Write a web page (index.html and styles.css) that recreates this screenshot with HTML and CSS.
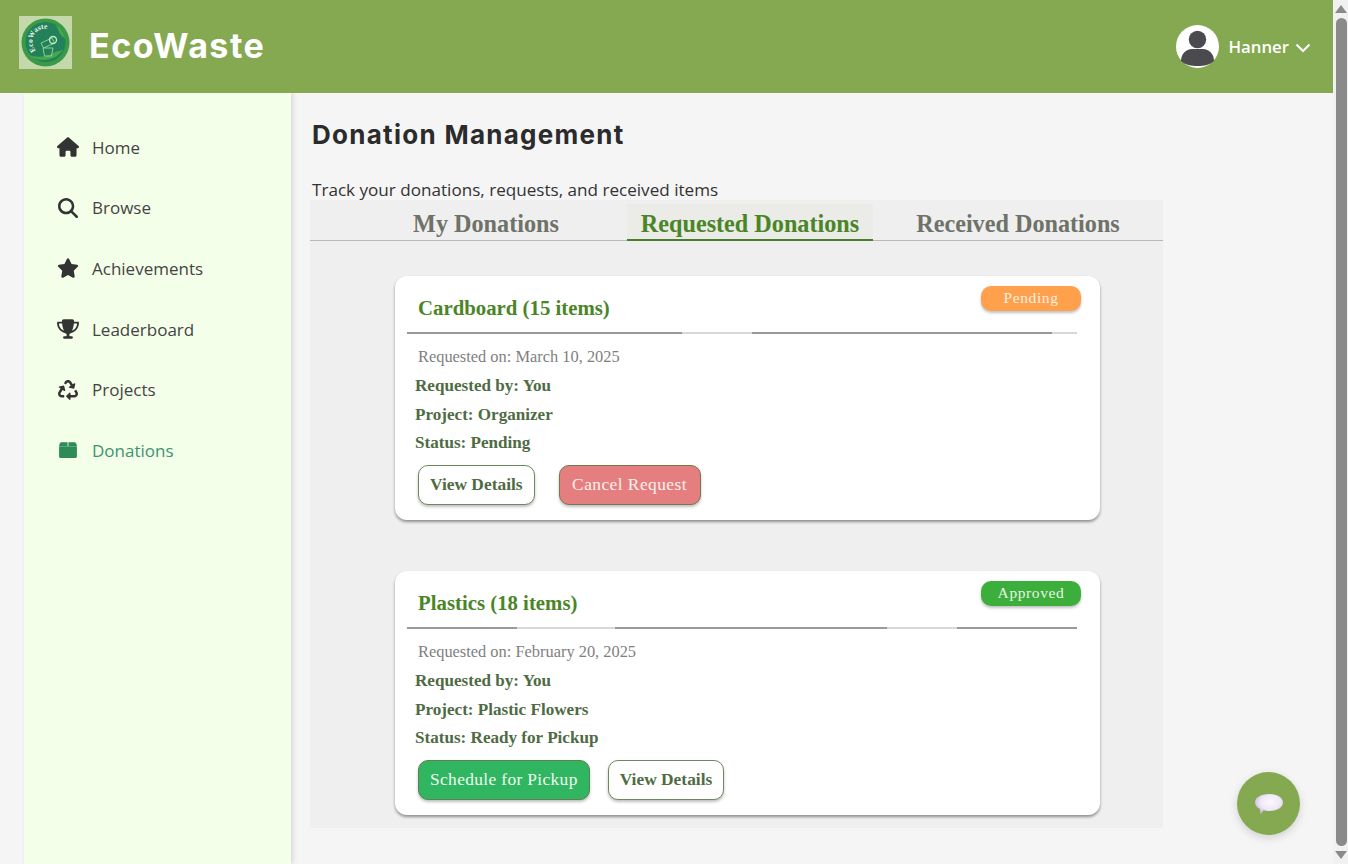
FILE: index.html
```html
<!DOCTYPE html>
<html lang="en">
<head>
<meta charset="utf-8">
<title>EcoWaste - Donation Management</title>
<link rel="stylesheet" href="styles.css">
</head>
<body>
<div class="window">
  <div class="page">
    <header class="topbar">
      <div class="brand">
        <svg class="logo" viewBox="0 0 53 53" aria-hidden="true">
          <rect width="53" height="53" fill="#c3d8ab"/>
          <circle cx="26.500" cy="26.500" r="24" fill="#3b9a45"/>
          <circle cx="26.500" cy="26" r="20" fill="#22805a"/>
          <path d="M9 39c8 6 20 7 29 1l6-6-4 1c-6 1-8 4-13 5-6 1-12 1-18-1z" fill="#45a84e"/>
          <path d="M37 9c5 3 8 8 9 14l-5-5z" fill="#45a84e"/>
          <path id="logoArc" d="M17 34.500A13 13 0 0 1 29.500 13" fill="none"/>
          <text class="logo-text"><textPath href="#logoArc">EcoWaste</textPath></text>
          <g fill="none" stroke="#8fd08f" stroke-width="1">
            <path d="M22 27l11-5 2.500 5-11 5z"/>
            <path d="M24 32h10l-1.500 8h-7z"/>
            <circle cx="34" cy="24" r="3.500" stroke="#c8ecc4" stroke-width="1.300"/>
          </g>
        </svg>
        <span class="brand-name">EcoWaste</span>
      </div>
      <div class="user">
        <svg class="avatar" viewBox="0 0 43 43" aria-hidden="true">
          <circle cx="21.500" cy="21.500" r="21.500" fill="#fff"/>
          <circle cx="21.500" cy="14.500" r="8.700" fill="#4b4b4f"/>
          <path d="M5 36c0-8 6-12 11-12h11c5 0 11 4 11 12-4 4-10 5-16.500 5S9 40 5 36z" fill="#4b4b4f"/>
        </svg>
        <span class="user-name">Hanner</span>
        <svg class="chevron" viewBox="0 0 16 10" aria-hidden="true"><path d="M1.500 1.500L8 8l6.500-6.500" fill="none" stroke="#fff" stroke-width="2"/></svg>
      </div>
    </header>
    <div class="body-row">
      <nav class="sidebar">
        <a class="nav-item"><svg class="nav-icon" viewBox="0 0 576 512"><path d="M575.800 255.500c0 18-15 32.100-32 32.100h-32l.7 160.200c0 2.700-.2 5.400-.5 8.100V472c0 22.100-17.900 40-40 40H456c-1.100 0-2.200 0-3.300-.1c-1.400 .1-2.800 .1-4.200 .1H416 392c-22.100 0-40-17.900-40-40V448 384c0-17.700-14.300-32-32-32H256c-17.700 0-32 14.300-32 32v64 24c0 22.100-17.900 40-40 40H160 128.100c-1.500 0-3-.1-4.500-.2c-1.200 .1-2.400 .2-3.600 .2H104c-22.100 0-40-17.900-40-40V360c0-.9 0-1.900 .1-2.800V287.600H32c-18 0-32-14-32-32.100c0-9 3-17 10-24L266.400 8c7-7 15-8 22-8s15 2 21 7L564.800 231.500c8 7 12 15 11 24z"/></svg>Home</a>
        <a class="nav-item"><svg class="nav-icon" viewBox="0 0 512 512"><path d="M416 208c0 45.900-14.900 88.300-40 122.700L502.600 457.400c12.500 12.500 12.500 32.800 0 45.300s-32.800 12.500-45.300 0L330.700 376c-34.400 25.200-76.800 40-122.700 40C93.100 416 0 322.900 0 208S93.100 0 208 0S416 93.100 416 208zM208 352a144 144 0 1 0 0-288 144 144 0 1 0 0 288z"/></svg>Browse</a>
        <a class="nav-item"><svg class="nav-icon" viewBox="0 0 576 512"><path d="M316.900 18C311.600 7 300.400 0 288.100 0s-23.400 7-28.800 18L195 150.300 51.400 171.500c-12 1.800-22 10.200-25.700 21.700s-.7 24.200 7.900 32.700L137.800 329 113.200 474.700c-2 12 3 24.200 12.900 31.300s23 8 33.800 2.300l128.300-68.500 128.300 68.500c10.800 5.700 23.900 4.900 33.800-2.300s14.900-19.300 12.900-31.300L438.500 329 542.700 225.900c8.600-8.500 11.700-21.200 7.900-32.700s-13.700-19.900-25.700-21.700L381.200 150.300 316.900 18z"/></svg>Achievements</a>
        <a class="nav-item"><svg class="nav-icon" viewBox="0 0 576 512"><path d="M400 0H176c-26.500 0-48.100 21.800-47.100 48.200c.2 5.300 .4 10.600 .7 15.800H24C10.700 64 0 74.700 0 88c0 92.600 33.500 157 78.500 200.700c44.300 43.100 98.300 64.800 138.100 75.800c23.400 6.500 39.400 26 39.400 45.600c0 20.900-17 37.900-37.900 37.900H192c-17.700 0-32 14.300-32 32s14.300 32 32 32H384c17.700 0 32-14.300 32-32s-14.300-32-32-32H357.900C337 448 320 431 320 410.100c0-19.600 15.900-39.200 39.400-45.600c39.900-11 93.900-32.700 138.200-75.800C542.500 245 576 180.600 576 88c0-13.300-10.700-24-24-24H446.400c.3-5.200 .5-10.400 .7-15.800C448.100 21.800 426.500 0 400 0zM48.900 112h84.400c9.100 90.100 29.200 150.300 51.900 190.600c-24.900-11-50.800-26.500-73.200-48.300c-32-31.100-58-76-63-142.300zM464.100 254.300c-22.400 21.800-48.300 37.300-73.200 48.300c22.700-40.300 42.800-100.500 51.900-190.600h84.400c-5.100 66.300-31.100 111.200-63 142.300z"/></svg>Leaderboard</a>
        <a class="nav-item"><svg class="nav-icon" viewBox="0 0 512 512"><path d="M184.561 261.903c3.232 13.997-12.123 24.635-24.068 17.168l-40.736-25.455-50.867 81.402C55.606 356.273 70.96 384 96.012 384H148c6.627 0 12 5.373 12 12v40c0 6.627-5.373 12-12 12H96.115c-75.334 0-121.302-83.048-81.408-146.880l50.822-81.388-40.725-25.448c-12.081-7.547-8.966-25.961 4.879-29.158l110.237-25.450c8.611-1.988 17.201 3.381 19.189 11.990l25.452 110.237zm98.561-182.915l41.289 66.076-40.740 25.457c-12.051 7.528-9 25.953 4.879 29.158l110.237 25.450c8.672 1.999 17.215-3.438 19.189-11.990l25.450-110.237c3.197-13.844-11.990-24.719-24.068-17.168l-40.687 25.424-41.263-66.082c-37.521-60.033-125.209-60.171-162.816 0l-17.963 28.766c-3.510 5.620-1.800 13.021 3.820 16.533l33.919 21.195c5.620 3.512 13.024 1.803 16.536-3.817l17.961-28.743c12.712-20.341 41.973-19.676 54.257-.022zM497.288 301.120l-27.515-44.065c-3.511-5.623-10.916-7.334-16.538-3.821l-33.861 21.159c-5.620 3.512-7.330 10.915-3.818 16.536l27.564 44.112c13.257 21.211-2.057 48.960-27.136 48.960H320V336.020c0-14.213-17.242-21.383-27.313-11.313l-80 79.981c-6.249 6.248-6.249 16.379 0 22.627l80 79.989C302.689 517.308 320 510.300 320 495.989V448h95.880c75.274 0 121.335-82.997 81.408-146.880z"/></svg>Projects</a>
        <a class="nav-item nav-active"><svg class="nav-icon" viewBox="-60 -10 632 532"><path d="M70 32C44 32 24 50 14 82L0 140h244V32zM268 32v108h244l-14-58C488 50 468 32 442 32zM0 150v290c0 26 18 44 44 44h424c26 0 44-18 44-44V150z"/></svg>Donations</a>
      </nav>
      <main class="content">
        <h1 class="page-title">Donation Management</h1>
        <p class="page-sub">Track your donations, requests, and received items</p>
        <section class="panel">
          <div class="tabs">
            <div class="tab tab-my">My Donations</div>
            <div class="tab tab-req">Requested Donations</div>
            <div class="tab tab-rec">Received Donations</div>
          </div>
          <article class="card card-first">
            <span class="badge badge-pending">Pending</span>
            <h2 class="card-title">Cardboard (15 items)</h2>
            <div class="rule rule-a"></div>
            <p class="date">Requested on: March 10, 2025</p>
            <p class="info">Requested by: You</p>
            <p class="info">Project: Organizer</p>
            <p class="info">Status: Pending</p>
            <div class="actions actions-wide">
              <button class="btn btn-outline">View Details</button>
              <button class="btn btn-danger">Cancel Request</button>
            </div>
          </article>
          <article class="card">
            <span class="badge badge-approved">Approved</span>
            <h2 class="card-title">Plastics (18 items)</h2>
            <div class="rule rule-b"></div>
            <p class="date">Requested on: February 20, 2025</p>
            <p class="info">Requested by: You</p>
            <p class="info">Project: Plastic Flowers</p>
            <p class="info">Status: Ready for Pickup</p>
            <div class="actions">
              <button class="btn btn-success">Schedule for Pickup</button>
              <button class="btn btn-outline">View Details</button>
            </div>
          </article>
        </section>
      </main>
    </div>
    <button class="chat" aria-label="Chat">
      <svg viewBox="0 0 30 24" width="30" height="24" aria-hidden="true">
        <defs><radialGradient id="bubble" cx="55%" cy="40%" r="65%"><stop offset="0" stop-color="#fbf8fd"/><stop offset=".55" stop-color="#efe8f6"/><stop offset="1" stop-color="#c3aede"/></radialGradient></defs>
        <path d="M15 2c8 0 14 3.500 14 8.500S23 19 15 19c-2 0-4-.2-5.500-.7L6.500 22.500 6 17C3 15.500 1 13.200 1 10.500 1 5.500 7 2 15 2z" fill="url(#bubble)"/>
      </svg>
    </button>
  </div>
  <div class="scrollbar">
    <span class="arrow-up"></span>
    <span class="thumb"></span>
    <span class="arrow-down"></span>
  </div>
</div>
</body>
</html>
```

FILE: styles.css
```css
* { box-sizing: border-box; }
html, body { margin: 0; height: 100%; overflow: hidden; }
body { font-family: "Open Sans", sans-serif; background: #f5f5f5; color: #333; }

.window { display: flex; height: 864px; width: 1348px; }
.page { position: relative; flex: 1; min-width: 0; display: flex; flex-direction: column; background: #f5f5f5; }

.scrollbar { width: 15px; background: #f1f1f1; display: flex; flex-direction: column; align-items: center; }
.thumb { width: 11px; flex: 1; margin: 2px 0 3px 1px; background: #8a8a8a; border-radius: 6px; }
.arrow-up, .arrow-down { width: 0; height: 0; border-left: 6px solid transparent; border-right: 6px solid transparent; }
.arrow-up { border-bottom: 8px solid #8a8a8a; margin: 5px 0 3px; }
.arrow-down { border-top: 8px solid #8a8a8a; margin: 2px 0 5px; }

.topbar { height: 93px; flex: none; background: #85a951; display: flex; align-items: center; justify-content: space-between; padding: 0 22px 0 19px; position: relative; z-index: 2; }
.brand { display: flex; align-items: center; gap: 17px; }
.logo { width: 53px; height: 53px; display: block; margin-bottom: 8px; }
.logo-text { font-family: "Liberation Serif", serif; font-weight: 700; font-size: 7.500px; fill: #eef7ea; }
.brand-name { font-family: "Inter", sans-serif; font-weight: 700; font-size: 34px; color: #fff; letter-spacing: 1.500px; margin-bottom: 2px; }
.user { display: flex; align-items: center; margin-top: -1px; }
.avatar { width: 43px; height: 43px; display: block; margin-right: 9px; }
.user-name { font-weight: 600; font-size: 16.800px; color: #fff; margin-right: 6px; }
.chevron { width: 16px; height: 10px; display: block; margin-top: 3px; }

.body-row { flex: 1; min-height: 0; display: flex; }

.sidebar { width: 267px; margin-left: 24px; flex: none; background: #f4ffe9; box-shadow: 2px 0 5px rgba(0,0,0,.12); padding-top: 24px; display: flex; flex-direction: column; }
.nav-item { height: 60.600px; display: flex; align-items: center; padding-left: 33px; font-size: 17px; color: #444; }
.nav-icon { width: 22px; height: 20px; margin-right: 13px; fill: #333; flex: none; }
.nav-active { color: #3d9470; }
.nav-active .nav-icon { fill: #2e8b57; }

.content { flex: 1; min-width: 0; padding: 0 170px 0 19px; }
.page-title { margin: 23px 0 0 2px; font-family: "Inter", sans-serif; font-weight: 700; font-size: 26px; line-height: 38px; color: #2b2b2b; letter-spacing: 1.280px; }
.page-sub { margin: 25px 0 0 2px; font-size: 17.100px; line-height: 22px; color: #333; }

.panel { margin-top: -1px; background: #efefef; height: 628px; padding-bottom: 13px; }

.tabs { height: 41px; display: flex; padding-left: 35px; border-bottom: 1px solid #b8b8b8; margin-bottom: 35px; }
.tab { font-family: "Liberation Serif", serif; font-weight: 700; font-size: 24.200px; line-height: 47px; height: 41px; text-align: center; color: #6e7268; white-space: nowrap; }
.tab-my { width: 282px; }
.tab-req { width: 246px; color: #4a8526; background: #ebebe8; border-bottom: 2px solid #4a7d2c; margin-top: 4px; height: 37px; line-height: 39px; }
.tab-rec { width: 290px; }

.card { position: relative; width: 705px; height: 244px; margin-left: 85px; background: #fff; border-radius: 12px; box-shadow: 0 2px 3px rgba(0,0,0,.4); padding: 0 23px; }
.card-first { margin-bottom: 51px; }
.badge { position: absolute; top: 10px; right: 19px; width: 100px; height: 25px; border-radius: 10px; color: #fff0e0; font-family: "Liberation Serif", serif; font-size: 15.500px; letter-spacing: .6px; line-height: 24px; text-align: center; box-shadow: 0 2px 3px rgba(0,0,0,.25); }
.badge-pending { background: #ffa04d; }
.badge-approved { background: #3cae3c; color: #e6f6e6; }
.card-title { margin: 0; padding-top: 19px; font-family: "Liberation Serif", serif; font-weight: 700; font-size: 20.800px; line-height: 26px; color: #4a8526; }
.rule { height: 2px; margin: 11px -1px 0 -11px; width: 670px; }
.rule-a { background: linear-gradient(90deg, #999 0 275px, #d8d8d8 275px 345px, #999 345px 645px, #d8d8d8 645px); }
.rule-b { background: linear-gradient(90deg, #999 0 110px, #d8d8d8 110px 208px, #999 208px 480px, #d8d8d8 480px 550px, #999 550px); }
.date { margin: 13px 0 0; font-family: "Liberation Serif", serif; font-size: 16.400px; line-height: 20px; color: #7f7f7f; }
.info { margin: 0 0 0 -3px; font-family: "Liberation Serif", serif; font-weight: 700; font-size: 17.100px; line-height: 28.500px; color: #4f6b44; }
.date + .info { margin-top: 5px; }
.actions { display: flex; gap: 18px; margin-top: 7px; }
.actions-wide { gap: 24px; }
.btn { height: 40px; border-radius: 10px; font-family: "Liberation Serif", serif; font-weight: 700; font-size: 17.400px; padding: 0 11px; border: 1.500px solid #6b8a5c; box-shadow: 0 2px 3px rgba(0,0,0,.25); }
.btn-outline { background: #fff; color: #4f6b44; }
.btn-danger { background: #e57f7f; color: #fdf0f0; border-color: #6f7a50; font-weight: 400; letter-spacing: .45px; padding: 0 12.500px; }
.btn-success { background: #30b561; color: #eefaf0; border-color: #5f7f52; font-weight: 400; letter-spacing: .35px; }

.chat { position: absolute; left: 1237px; top: 772px; width: 63px; height: 63px; padding: 0; border: 0; border-radius: 50%; background: #85a951; box-shadow: 0 3px 8px rgba(0,0,0,.15); display: flex; align-items: center; justify-content: center; }
```
